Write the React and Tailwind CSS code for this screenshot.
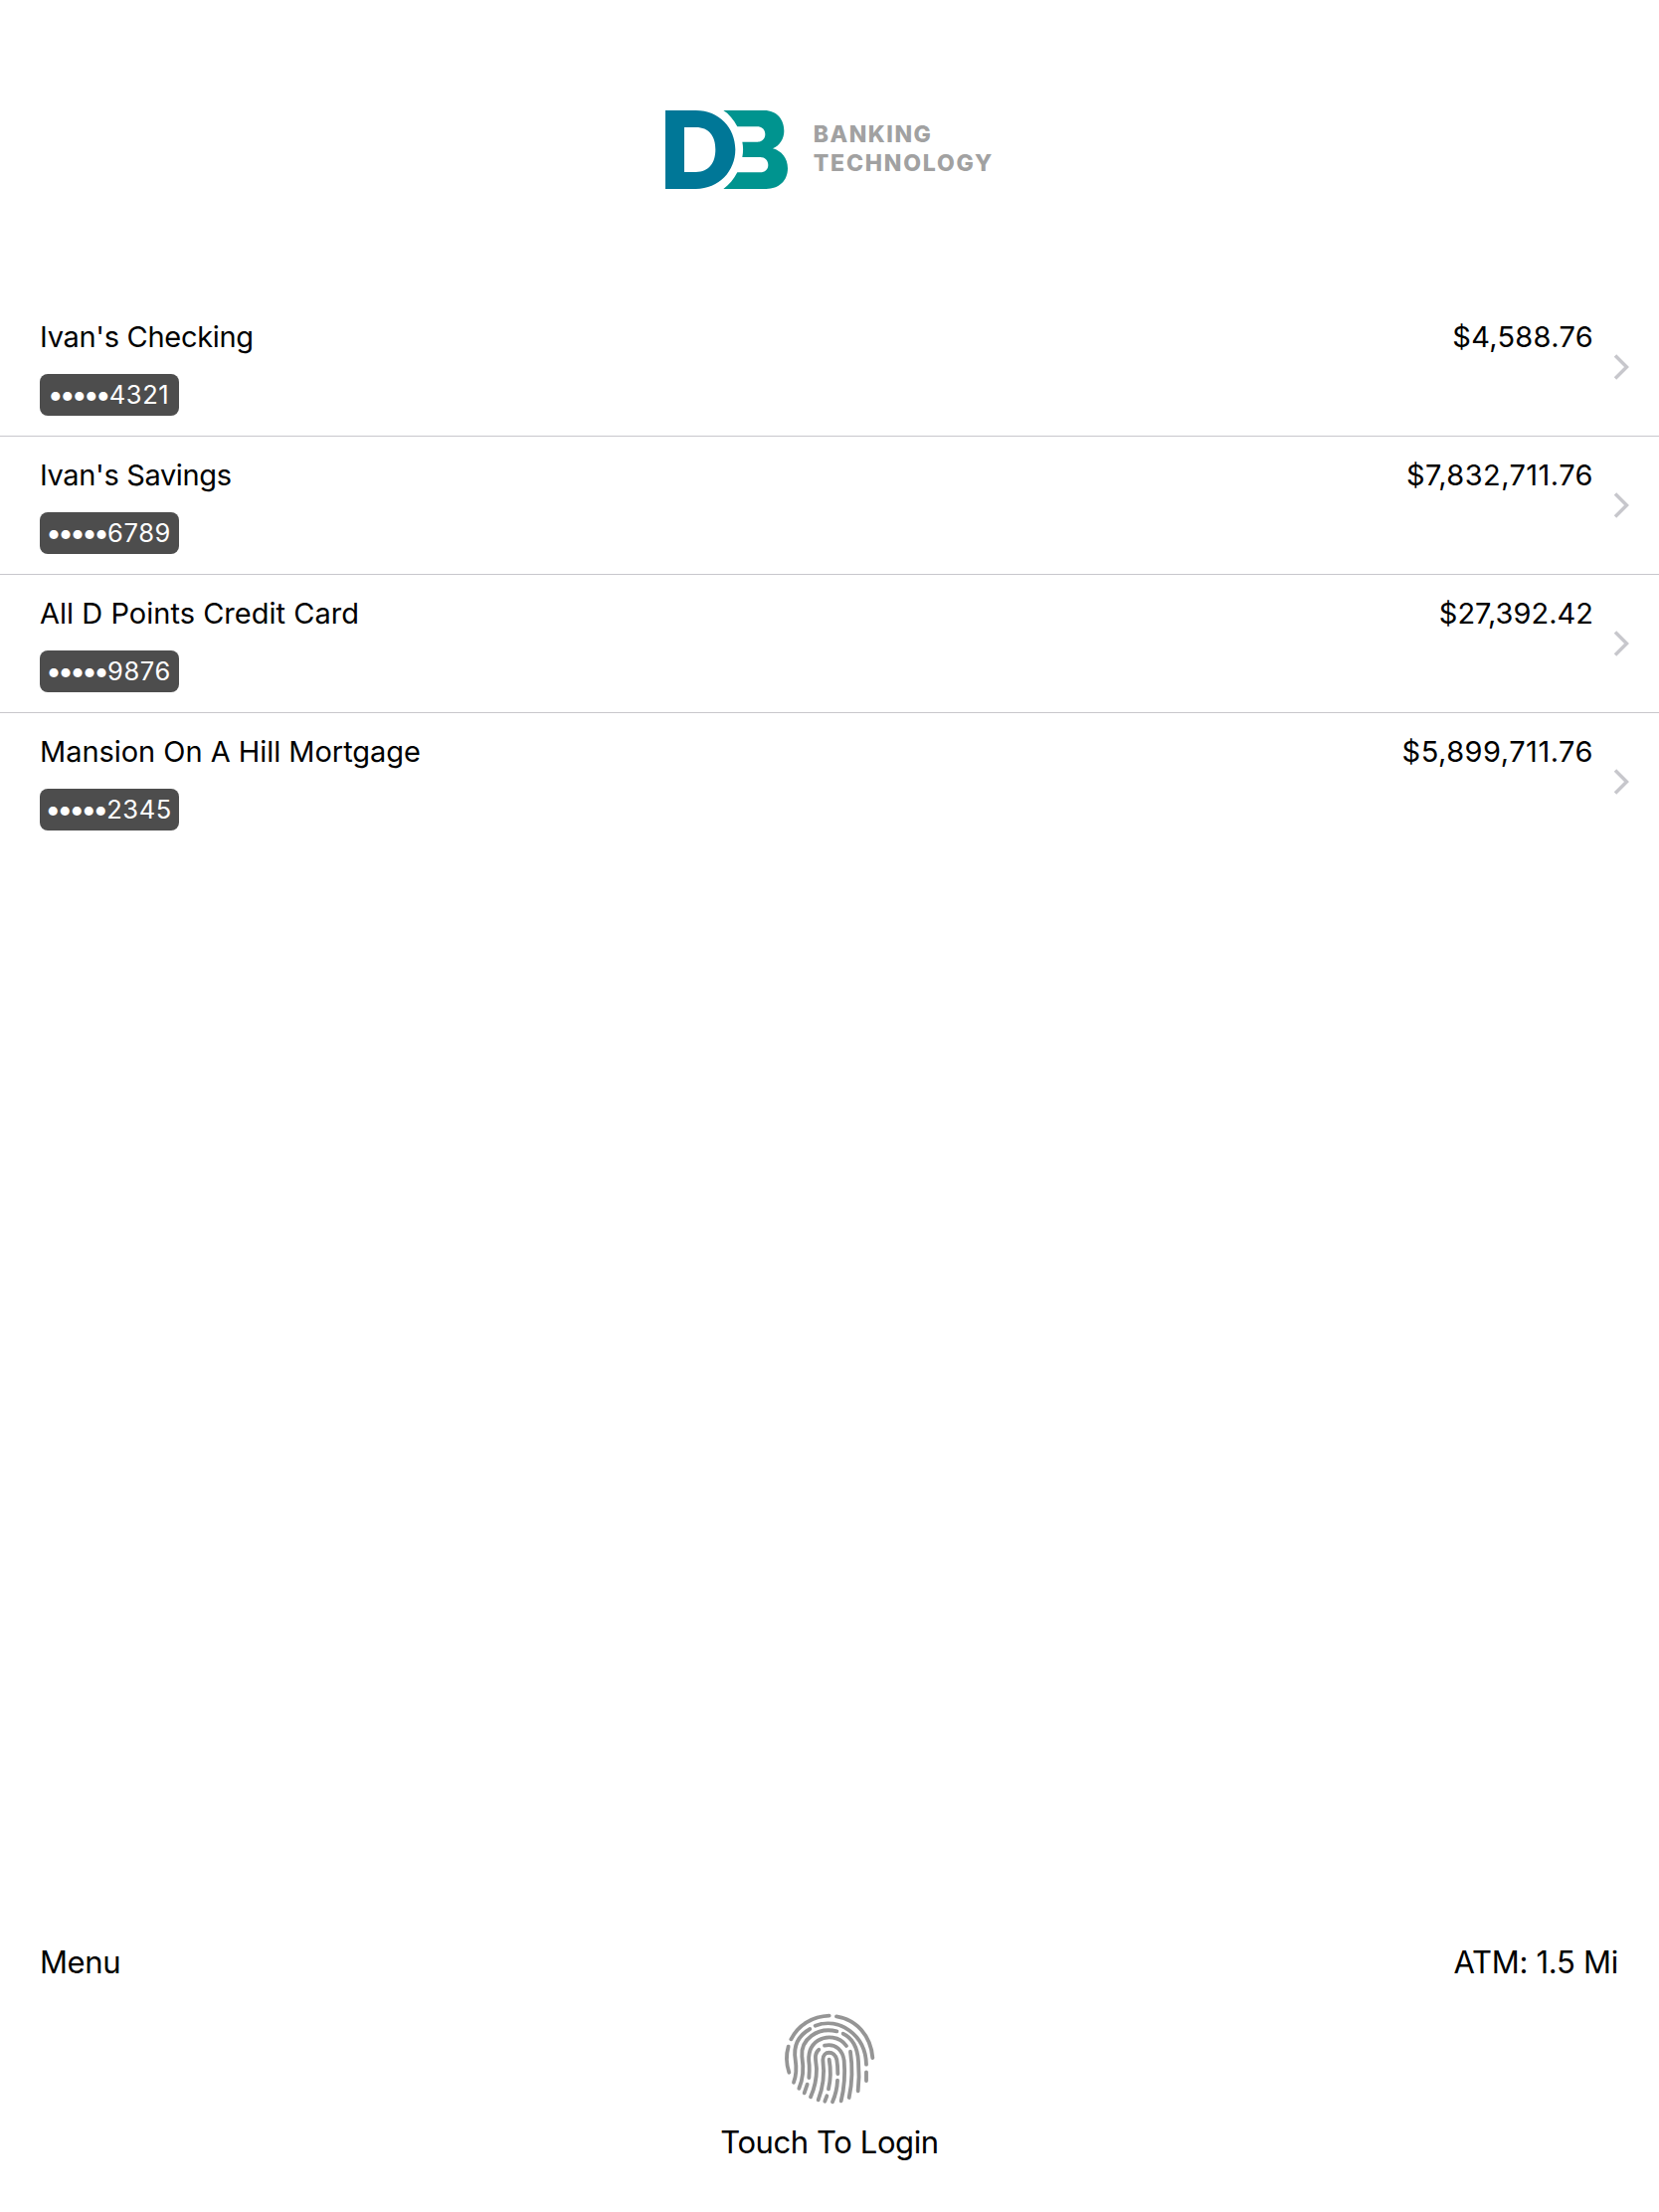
const accounts = [
  {
    name: "Ivan's Checking",
    nameSpacing: 'tracking-[-0.3px]',
    digits: '4321',
    amount: '$4,588.76',
    amountSpacing: 'tracking-[0.3px]',
  },
  {
    name: "Ivan's Savings",
    nameSpacing: 'tracking-[-0.36px]',
    digits: '6789',
    amount: '$7,832,711.76',
    amountSpacing: 'tracking-[0.43px]',
  },
  {
    name: 'All D Points Credit Card',
    nameSpacing: 'tracking-[0.02px]',
    digits: '9876',
    amount: '$27,392.42',
    amountSpacing: 'tracking-[0.02px]',
  },
  {
    name: 'Mansion On A Hill Mortgage',
    nameSpacing: 'tracking-[-0.04px]',
    digits: '2345',
    amount: '$5,899,711.76',
    amountSpacing: 'tracking-[0.48px]',
  },
];

function LogoMark() {
  return (
    <svg className="h-[79px] w-[123px] shrink-0" viewBox="58 62 369 237" preserveAspectRatio="none">
      <path
        fill="#007797"
        fillRule="evenodd"
        d="M58 62H150C220 62 269 115 269 180C269 245 220 299 150 299H58ZM115 113V248H150C190 248 209 220 209 180C209 140 190 113 150 113Z"
      />
      <path
        fill="#00948f"
        d="M233 62H356C395 62 416 90 416 124C416 147 403 168 382 177C408 184 427 206 427 237C427 275 400 299 362 299H233C250 287 264 270 275 249H344C358 249 368 240 368 227C368 212 358 203 344 203H290C293 188 293 172 290 157H336C350 157 359 147 359 134C359 121 350 111 336 111H275C264 90 250 73 233 62Z"
      />
    </svg>
  );
}

function Fingerprint() {
  return (
    <svg
      className="size-[110px]"
      viewBox="0 0 330 330"
      fill="none"
      stroke="#959595"
      strokeWidth="11.5"
      strokeLinecap="round"
    >
      <path d="M46 106C68 63 110 37 161 35" />
      <path d="M183 37C243 46 287 96 292 162" />
      <path d="M38 128C30 155 32 182 40 206" />
      <path d="M119 65C190 38 271 92 273 182" />
      <path d="M273 205V231" />
      <path d="M103 75C66 96 53 130 59 167C63 193 63 213 54 236" />
      <path d="M184 82C125 68 74 107 79 158C84 190 84 223 70 254" />
      <path d="M203 89C235 104 247 137 249 172C252 208 251 235 248 262" />
      <path d="M213 126C193 96 152 94 127 110C101 127 96 152 101 184C102 200 101 210 100 222" />
      <path d="M95 242L86 268" />
      <path d="M130 137C114 150 121 169 123 195C123 230 116 256 105 280" />
      <path d="M147 125C183 117 202 142 206 170C210 215 206 255 197 292" />
      <path d="M225 143C232 190 230 240 221 282" />
      <path d="M128 289C144 248 147 207 142 168C142 139 178 139 184 168C187 185 187 195 187 210" />
      <path d="M161 167C166 195 165 230 159 256" />
      <path d="M154 277L148 293" />
      <path d="M186 230C185 255 179 277 171 295" />
    </svg>
  );
}

function AccountRow({ name, nameSpacing, digits, amount, amountSpacing }) {
  return (
    <li className="flex h-[139px] border-b border-[#c8c7cc] pl-10 pr-[29px] last:border-transparent">
      <div className="flex flex-1 flex-col items-start pt-[21px]">
        <span className={`text-[29px] leading-9 whitespace-nowrap ${nameSpacing}`}>{name}</span>
        <span className="mt-[19px] flex h-[42px] w-[140px] items-center justify-center rounded-lg bg-[#4d4d4d] text-[25.5px] leading-none tracking-[0.6px] text-white">
          <span className="flex text-[28.5px]">
            {[0, 1, 2, 3, 4].map((i) => (
              <span key={i} className="flex w-3 justify-center tracking-normal">
                •
              </span>
            ))}
          </span>
          {digits}
        </span>
      </div>
      <span className={`pt-[21px] text-[29px] leading-9 ${amountSpacing}`}>{amount}</span>
      <svg className="ml-[20px] mt-[55px] h-[28px] w-[17px]" viewBox="0 0 17 28" fill="none">
        <path d="M2 2.5L13.5 14L2 25.5" stroke="#c7c7cc" strokeWidth="3.5" />
      </svg>
    </li>
  );
}

export default function App() {
  return (
    <div className="flex h-[2224px] w-[1668px] flex-col bg-white font-['Inter',sans-serif] text-black">
      <header className="flex h-[300px] justify-center pt-[111px]">
        <LogoMark />
        <div className="ml-[25.5px] w-[181px] pt-[10px] text-[23px] leading-[29px] font-extrabold text-[#a1a1a1]">
          <div className="tracking-[1.5px]">BANKING</div>
          <div className="tracking-[1.8px]">TECHNOLOGY</div>
        </div>
      </header>
      <ul>
        {accounts.map((a) => (
          <AccountRow key={a.name} {...a} />
        ))}
      </ul>
      <footer className="mt-auto flex flex-col items-center text-[31px] leading-10 tracking-[-0.4px]">
        <div className="flex w-full justify-between pr-[41px] pl-10">
          <span>Menu</span>
          <span className="tracking-[-0.28px]">ATM: 1.5 Mi</span>
        </div>
        <div className="mt-[22px] pl-[2px]">
          <Fingerprint />
        </div>
        <span className="mt-[9px] mb-[50px]">Touch To Login</span>
      </footer>
    </div>
  );
}
